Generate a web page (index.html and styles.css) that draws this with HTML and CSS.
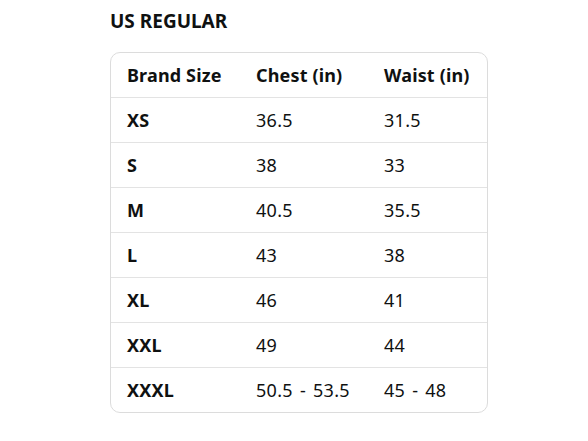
FILE: index.html
```html
<!DOCTYPE html>
<html>
<head>
<meta charset="utf-8">
<link rel="stylesheet" href="styles.css">
</head>
<body>
<div class="page">
  <h2 class="title">US REGULAR</h2>
  <div class="card">
    <table class="sizes">
      <thead>
        <tr><th>Brand Size</th><th>Chest (in)</th><th>Waist (in)</th></tr>
      </thead>
      <tbody>
        <tr><th>XS</th><td>36.5</td><td>31.5</td></tr>
        <tr><th>S</th><td>38</td><td>33</td></tr>
        <tr><th>M</th><td>40.5</td><td>35.5</td></tr>
        <tr><th>L</th><td>43</td><td>38</td></tr>
        <tr><th>XL</th><td>46</td><td>41</td></tr>
        <tr><th>XXL</th><td>49</td><td>44</td></tr>
        <tr class="last"><th>XXXL</th><td>50.5 - 53.5</td><td>45 - 48</td></tr>
      </tbody>
    </table>
  </div>
</div>
</body>
</html>
```
FILE: styles.css
```css
html, body {
  margin: 0;
  padding: 0;
  background: #ffffff;
}
body {
  font-family: "Noto Sans", "Open Sans", sans-serif;
  color: #0f1111;
}
.page {
  padding: 9px 0 0 110px;
}
.title {
  margin: 0;
  font-size: 19px;
  font-weight: 700;
  line-height: 24px;
  letter-spacing: 0;
}
.card {
  margin-top: 19px;
  width: 376px;
  border: 1px solid #dcdcdc;
  border-radius: 10px;
  overflow: hidden;
}
.sizes {
  border-collapse: collapse;
  table-layout: fixed;
  width: 390px;
  font-size: 18px;
}
.sizes th, .sizes td {
  height: 44px;
  padding: 0 0 0 16px;
  text-align: left;
  border-bottom: 1px solid #e3e3e3;
  white-space: nowrap;
  vertical-align: middle;
}
.sizes th:nth-child(1), .sizes td:nth-child(1) { width: 113px; }
.sizes th:nth-child(2), .sizes td:nth-child(2) { width: 112px; }
.sizes th:nth-child(3), .sizes td:nth-child(3) { width: 120px; }
.sizes th { font-weight: 700; letter-spacing: 0.15px; }
.sizes td { font-weight: 400; letter-spacing: 0.3px; word-spacing: 2px; }
.sizes tr.last th, .sizes tr.last td { border-bottom: none; }
```
